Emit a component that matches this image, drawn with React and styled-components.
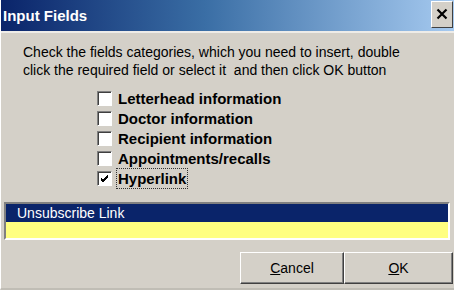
import React from "react";
import styled, { createGlobalStyle } from "styled-components";

const Global = createGlobalStyle`
  html, body { margin: 0; padding: 0; background: #d4d0c8; }
  body { font-family: "Liberation Sans", Arial, sans-serif; }
`;

const Window = styled.div`
  width: 454px;
  height: 290px;
  box-sizing: border-box;
  background: #d4d0c8;
  border-left: 1px solid #fff;
  border-bottom: 2px solid #c0bdb5;
  display: flex;
  flex-direction: column;
`;

const TitleBar = styled.div`
  height: 31px;
  flex: none;
  background: linear-gradient(to right, #0a246a 0%, #3a6ea5 45%, #a6caf0 100%);
  display: flex;
  align-items: center;
  justify-content: space-between;
  padding: 0 1px 0 2px;
  border-bottom: 2px solid #eeece8;
`;

const Title = styled.div`
  color: #fff;
  font-family: "Liberation Sans", Arial, sans-serif;
  font-weight: bold;
  font-size: 15px;
`;

const CloseButton = styled.div`
  width: 20px;
  height: 25px;
  margin-top: -3px;
  background: #d4d0c8;
  border: 1px solid;
  border-color: #fff #404040 #404040 #fff;
  display: flex;
  align-items: center;
  justify-content: center;
`;

const Body = styled.div`
  flex: 1;
  display: flex;
  flex-direction: column;
`;

const Intro = styled.p`
  margin: 10px 0 0 22px;
  font-size: 14px;
  line-height: 18px;
  color: #000;
`;

const Checks = styled.div`
  margin: 12px 0 0 96px;
  display: flex;
  flex-direction: column;
  gap: 5px;
`;

const CheckRow = styled.div`
  display: flex;
  align-items: center;
  height: 15px;
`;

const Box = styled.div`
  width: 13px;
  height: 13px;
  background: #fff;
  border: 1px solid;
  border-color: #808080 #fff #fff #808080;
  box-shadow: inset 1px 1px 0 #404040;
  display: flex;
  align-items: center;
  justify-content: center;
  flex: none;
`;

const Label = styled.span`
  margin-left: 4px;
  padding: 2px 2px;
  font-weight: bold;
  font-size: 15px;
  line-height: 17px;
  color: #000;
  outline: ${(p) => (p.$focus ? "1px dotted #333" : "none")};
  outline-offset: -1px;
`;

const List = styled.div`
  margin: 16px 4px 0 3px;
  border: 2px solid;
  border-color: #808080 #fff #fff #808080;
  box-shadow: inset 1px 1px 0 #404040;
  display: flex;
  flex-direction: column;
`;

const ListItem = styled.div`
  height: ${(p) => (p.$selected ? 18 : 16)}px;
  font-size: 14px;
  line-height: 18px;
  padding-left: 11px;
  color: ${(p) => (p.$selected ? "#fff" : "#000")};
  background: ${(p) => (p.$selected ? "#0a246a" : "#ffff80")};
`;

const Footer = styled.div`
  display: flex;
  justify-content: flex-end;
  padding: 12px 1px 0 0;
`;

const Button = styled.button`
  width: ${(p) => p.$w}px;
  height: 32px;
  box-sizing: border-box;
  background: #d4d0c8;
  border: 1px solid;
  border-color: #fff #404040 #404040 #fff;
  box-shadow: inset -1px -1px 0 #808080;
  font-family: "Liberation Sans", Arial, sans-serif;
  font-size: 14px;
  color: #000;
  padding: 0;
  u { text-decoration: underline; }
`;

const Check = () => (
  <svg width="9" height="9" viewBox="0 0 9 9">
    <path d="M1 4 L3 6 L8 1 M1 5 L3 7 L8 2 M1 6 L3 8 L8 3" stroke="#000" strokeWidth="1" fill="none" />
  </svg>
);

const items = [
  ["Letterhead information", false],
  ["Doctor information", false],
  ["Recipient information", false],
  ["Appointments/recalls", false],
  ["Hyperlink", true],
];

export default function App() {
  return (
    <>
      <Global />
      <Window>
        <TitleBar>
          <Title>Input Fields</Title>
          <CloseButton>
            <svg width="12" height="12" viewBox="0 0 12 12">
              <path d="M1.5 1.5 L10.5 10.5 M10.5 1.5 L1.5 10.5" stroke="#000" strokeWidth="2.2" />
            </svg>
          </CloseButton>
        </TitleBar>
        <Body>
          <Intro>
            Check the fields categories, which you need to insert, double
            <br />
            click the required field or select it&nbsp; and then click OK button
          </Intro>
          <Checks>
            {items.map(([t, c]) => (
              <CheckRow key={t}>
                <Box>{c && <Check />}</Box>
                <Label $focus={c}>{t}</Label>
              </CheckRow>
            ))}
          </Checks>
          <List>
            <ListItem $selected>Unsubscribe Link</ListItem>
            <ListItem />
          </List>
          <Footer>
            <Button $w={104}><u>C</u>ancel</Button>
            <Button $w={109}><u>O</u>K</Button>
          </Footer>
        </Body>
      </Window>
    </>
  );
}
